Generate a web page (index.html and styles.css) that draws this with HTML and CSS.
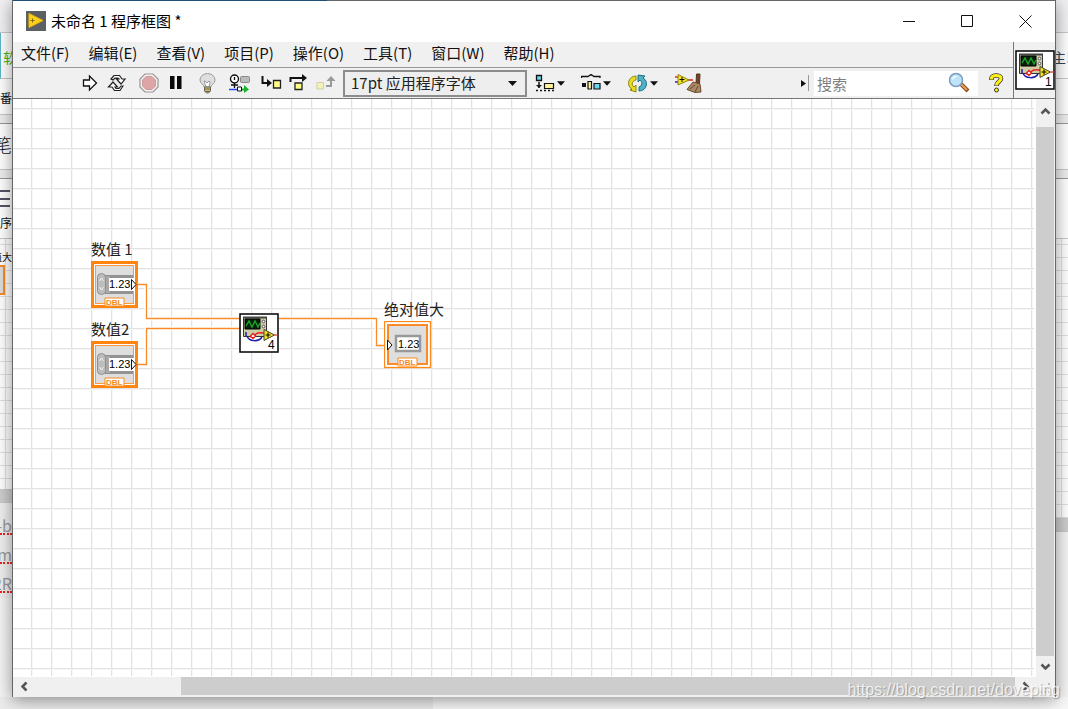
FILE: index.html
```html
<!DOCTYPE html>
<html lang="zh-CN">
<head>
<meta charset="utf-8">
<title>未命名 1 程序框图</title>
<link rel="stylesheet" href="styles.css">
</head>
<body>
<svg class="defs" aria-hidden="true">
  <symbol id="vi" viewBox="0 0 40 40">
    <rect x="1" y="1" width="38" height="38" fill="#fff" stroke="#111" stroke-width="1.600"/>
    <path d="M4.500 4.500h23v19h-23z" fill="#cfcda6" stroke="#333"/>
    <path d="M4 3.500h24v2H4z" fill="#444"/>
    <path d="M6 6h15v10H6z" fill="#06210a" stroke="#000"/>
    <path d="M7 13l3-5 3 6 3-6 3 6 2-4" fill="none" stroke="#18a82c" stroke-width="1.400"/>
    <circle cx="24.500" cy="8.500" r="1.300" fill="#fff" stroke="#555"/><circle cx="24.500" cy="13.500" r="1.300" fill="#fff" stroke="#555"/>
    <path d="M7 19v4M8 23c2 6 12 6 15 1" fill="none" stroke="#1c1ca8" stroke-width="1.500"/>
    <path d="M11 24c3 0 4-1 6-3s6-1 9-1" fill="none" stroke="#ef2020" stroke-width="1.500"/>
    <path d="M14 20.500l2.500 2.500-2.500 2.500-2.500-2.500z" fill="#fff" stroke="#e01818" stroke-width="1.300"/>
    <path d="M25 16.500L35.500 22 25 27.500z" fill="#f4e414" stroke="#444"/>
    <path d="M26.500 22h5M29 19.500v5" stroke="#111" stroke-width="1.200"/>
    <path d="M35.500 22h3" stroke="#f33" stroke-width="1.300"/>
  </symbol>
  <symbol id="control" viewBox="0 0 48 48">
    <rect x="1.500" y="1.500" width="44" height="44" fill="#fff" stroke="#ff8410" stroke-width="3"/>
    <rect x="4.500" y="4.500" width="38" height="38" fill="#dedede" stroke="#ff9a3c"/>
    <path d="M14 14h28v3H14zM14 30h28v3H14z" fill="#929292"/>
    <path d="M13 15h6v17h-6z" fill="#a8a8a8"/>
    <rect x="6.500" y="12.500" width="8" height="21" rx="4" fill="#bdbdbd" stroke="#8e8e8e"/>
    <path d="M8.500 20l2-3 2 3M8.500 26l2 3 2-3" fill="none" stroke="#f2f2f2"/>
    <path d="M18 17h25v13H18z" fill="#fff"/>
    <path d="M40.500 18.500l4.500 5-4.500 5z" fill="#fff" stroke="#111"/>
    <text x="18" y="27" font-size="11" fill="#000">1.23</text>
    <path d="M14 37h19v8H14z" fill="#fff" stroke="#ff8a1c"/>
    <text x="15" y="44" font-size="8" font-weight="700" fill="#f58a20">DBL</text>
  </symbol>
  <symbol id="indicator" viewBox="0 0 48 48">
    <rect x=".5" y=".5" width="46" height="46" fill="#fff" stroke="#ff8a1c" stroke-width="1.300"/>
    <rect x="4" y="4" width="39" height="39" fill="#dedede" stroke="#f98c28" stroke-width="2"/>
    <rect x="12" y="15" width="24" height="15" fill="#fff" stroke="#999" stroke-width="2.500"/>
    <path d="M3.500 19l4.500 5-4.500 5z" fill="#fff" stroke="#111"/>
    <text x="14" y="27" font-size="11" fill="#000">1.23</text>
    <path d="M14 37h19v8H14z" fill="#fff" stroke="#ff8a1c"/>
    <text x="15" y="44" font-size="8" font-weight="700" fill="#f58a20">DBL</text>
  </symbol>
  <symbol id="caret" viewBox="0 0 9 5"><path d="M0 0h9L4.500 5z" fill="#111"/></symbol>
</svg>

<div class="desktop">
  <div class="behind behind-left" aria-hidden="true">
    <div class="strip s-title"></div>
    <div class="strip s-row green">软</div>
    <div class="strip s-tab">番</div>
    <div class="strip s-gap"></div>
    <div class="strip s-note">笔</div>
    <div class="strip s-gap"></div>
    <div class="strip s-tool"><i class="bars"></i><span>序</span></div>
    <div class="strip s-grid"><span>值大</span><i class="piece"></i></div>
    <div class="strip s-scroll"></div>
    <div class="strip s-text"><u>-b</u><u>m</u><u>2R</u></div>
  </div>

  <main class="window">
    <header class="titlebar">
      <svg class="logo" width="20" height="20" viewBox="0 0 20 20"><path d="M0 0h20v20H0z" fill="#5d6063"/><path d="M3 2.500L17 9.500 3 16.500z" fill="#ffd21a" stroke="#f4b400"/><path d="M4.500 9.500h4M6.500 7.500v4" stroke="#7b6a1a"/></svg>
      <h1>未命名 1 程序框图 *</h1>
      <div class="sysbuttons">
        <button aria-label="最小化"><svg width="13" height="13"><path d="M0 6.500h12" stroke="#111"/></svg></button>
        <button aria-label="最大化"><svg width="13" height="13"><path d="M.5 .5h11v11H.5z" fill="none" stroke="#111"/></svg></button>
        <button aria-label="关闭"><svg width="13" height="13"><path d="M.5 .5l12 12M12.500 .5l-12 12" stroke="#111"/></svg></button>
      </div>
    </header>

    <div class="bars-area">
      <div class="bars-main">
        <nav class="menu">
          <button>文件(F)</button><button>编辑(E)</button><button>查看(V)</button><button>项目(P)</button><button>操作(O)</button><button>工具(T)</button><button>窗口(W)</button><button>帮助(H)</button>
        </nav>
        <div class="toolbar">
          <div class="group">
            <button aria-label="运行"><svg width="16" height="18" viewBox="0 0 16 18"><path d="M1.500 6h6V2l7 7-7 7v-4h-6z" fill="#fff" stroke="#111" stroke-width="1.300"/></svg></button>
            <button aria-label="连续运行"><svg width="20" height="18" viewBox="0 0 20 18"><g fill="#fff" stroke="#222" stroke-width="1.200"><path d="M4 5l3-3.500h5.500L15 5h3l-4 5-4.500-5H12l-1-1H8L6 6z"/><path d="M16 12l-3 4.500H7.500L5 13H1.500L6 8l4.500 5H8l1 1.500h3l2-2.500z"/></g></svg></button>
          </div>
          <div class="group">
            <button aria-label="中止执行"><svg width="20" height="20" viewBox="0 0 20 20"><path d="M6 1h8l5 5v8l-5 5H6l-5-5V6z" fill="#f4f4f4" stroke="#9b9393" stroke-width="1.200"/><path d="M7 3.500h6L16.500 7v6L13 16.500H7L3.500 13V7z" fill="#dda5a5" stroke="#c99"/></svg></button>
            <button aria-label="暂停"><svg width="12" height="14"><path d="M0 0h4.500v13H0zM7 0h4.500v13H7z" fill="#080808"/></svg></button>
          </div>
          <div class="group">
            <button aria-label="高亮显示执行过程"><svg width="17" height="21" viewBox="0 0 17 21"><path d="M5 14c0-3-4-3-4-7a7.500 6.500 0 0 1 15 0c0 4-4 4-4 7z" fill="#dedede" stroke="#9a9a9a"/><path d="M6 8l2 2 2-2 1 1-1 5H7L5 8z" fill="#fff" stroke="#999"/><path d="M5.500 14h6v4l-2 2h-2l-2-2z" fill="#d6c054" stroke="#666"/><path d="M5 16h7M6 18.500h5" stroke="#666"/></svg></button>
          </div>
          <div class="group">
            <button aria-label="保存连线值"><svg width="21" height="19" viewBox="0 0 21 19"><circle cx="5.500" cy="5" r="4" fill="#fff" stroke="#111" stroke-width="1.400"/><path d="M5.500 3v3M5.500 9v5M2 11h7" stroke="#111" stroke-width="1.300" fill="none"/><rect x="11.500" y="2.500" width="9" height="6" rx="1" fill="#bbb" stroke="#888"/><path d="M0 15.500h9" stroke="#2049e8" stroke-width="1.500"/><path d="M8.500 13h4v4h-4z" fill="#fff" stroke="#111"/><path d="M13 14.500h2V11l5 4.500-5 3.500v-2.500h-2z" fill="#18b52a"/></svg></button>
          </div>
          <div class="group">
            <button aria-label="单步步入"><svg width="21" height="16" viewBox="0 0 21 16"><path d="M1.500 1v7H8" fill="none" stroke="#111" stroke-width="2"/><path d="M6 4l5 4-5 4z" fill="#111"/><path d="M12.500 5.500h7V13h-7z" fill="#ffff85" stroke="#222" stroke-width="1.300"/></svg></button>
            <button aria-label="单步步过"><svg width="20" height="18" viewBox="0 0 20 18"><path d="M1.500 8V4H14" fill="none" stroke="#111" stroke-width="2"/><path d="M13 0l5 4-5 4z" fill="#111"/><path d="M6 9h7v6.500H6z" fill="#ffff85" stroke="#222" stroke-width="1.300"/></svg></button>
            <button aria-label="单步步出"><svg width="20" height="16" viewBox="0 0 20 16"><path d="M1 7.500h6.500V14H1z" fill="#f2f1b8" stroke="#cfcfa8"/><path d="M10 11h5V5" fill="none" stroke="#999" stroke-width="2"/><path d="M10.500 6L15 1l4.500 5z" fill="#999"/></svg></button>
          </div>
          <label class="font-pick">
            <select aria-label="字体"><option>17pt 应用程序字体</option></select>
            <svg width="9" height="5"><use href="#caret"/></svg>
          </label>
          <div class="group drops">
            <button aria-label="对齐对象"><svg width="20" height="18" viewBox="0 0 20 18"><path d="M1.500 1.500h5v5h-5z" fill="#67d9ee" stroke="#111" stroke-width="1.300"/><path d="M4 8v6" stroke="#111" stroke-width="1.500"/><path d="M1 11h6l-3 3z" fill="#111"/><path d="M9.500 9.500h9v5h-9z" fill="#fff19a" stroke="#111" stroke-width="1.200"/><path d="M1 16.500h18" stroke="#111" stroke-width="1.300" stroke-dasharray="2 2"/></svg><svg width="8" height="5"><use href="#caret"/></svg></button>
            <button aria-label="分布对象"><svg width="20" height="18" viewBox="0 0 20 18"><path d="M.5 4V2.500H7L10 .5l3 2h6V4" fill="none" stroke="#111" stroke-width="1.300"/><path d="M1 9h4v4H1z" fill="#111"/><path d="M7 7.500h3.500V15H7z" fill="#fff19a" stroke="#111" stroke-width="1.200"/><path d="M13 9.500h6V15h-6z" fill="#67d9ee" stroke="#111" stroke-width="1.200"/></svg><svg width="8" height="5"><use href="#caret"/></svg></button>
            <button aria-label="重新排序"><svg width="21" height="19" viewBox="0 0 21 19"><path d="M9 2C1 2-1 12 5 15l-2 1 6 2V11l-2 2C4 11 5 7 9 6z" fill="#e6dd24" stroke="#8d8510"/><path d="M12 17c8 0 10-10 4-13l2-2-7-1v7l2-2c3 2 2 6-1 7z" fill="#4fb3c8" stroke="#1d6f80"/></svg><svg width="8" height="5"><use href="#caret"/></svg></button>
            <button aria-label="整理程序框图"><svg width="27" height="22" viewBox="0 0 27 22"><path d="M0 5h4" stroke="#e22" stroke-width="1.500"/><path d="M0 10h4" stroke="#22d" stroke-width="1.500"/><path d="M12 8h6" stroke="#e22" stroke-width="1.500"/><path d="M3 2.500L14 8 3 13z" fill="#f5e51a" stroke="#8d8410"/><path d="M4.500 7.500h5M7 5v5" stroke="#111"/><path d="M21.500 2h3.500l-.5 10h-3.500z" fill="#70432a" stroke="#5a3520"/><path d="M18 10l7 2 1 8-6 .5-8-3z" fill="#a88a68" stroke="#6b4a2c"/><path d="M15 17l5-4M20 20l3-6" stroke="#6c4a2c"/></svg></button>
          </div>
          <div class="search-area">
            <svg width="9" height="16" viewBox="0 0 9 16"><path d="M1 5l5 3.500L1 12z" fill="#111"/><path d="M8.500 0v16" stroke="#999"/></svg>
            <label class="search"><input type="text" placeholder="搜索" aria-label="搜索">
              <svg width="22" height="22" viewBox="0 0 22 22"><path d="M13 12l7 7" stroke="#8b4a20" stroke-width="4"/><path d="M13 12l6 6" stroke="#e8a05a" stroke-width="2"/><circle cx="8" cy="8" r="6.500" fill="#bfe4fa" stroke="#7e9cc0" stroke-width="1.500"/><path d="M4 8c0-3 3-5 6-4-3 1-4 2-6 4z" fill="#fff"/></svg></label>
            <button aria-label="帮助"><svg width="15" height="20" viewBox="0 0 15 20"><path d="M2.500 7V5.500c0-4 9.500-4 9.500 0 0 3-4.500 3-4.500 7.500" fill="none" stroke="#333" stroke-width="4.500"/><path d="M2.500 6.500v-1c0-4 9.500-4 9.500 0 0 3-4.500 3-4.500 7" fill="none" stroke="#ffef16" stroke-width="3"/><circle cx="7.500" cy="17" r="2" fill="#ffef16" stroke="#333"/></svg></button>
          </div>
        </div>
      </div>
      <div class="vi-pane"><svg class="glyphs" width="40" height="40"><use href="#vi"/><text x="30" y="36" font-size="12">1</text></svg></div>
    </div>

    <div class="workspace">
      <section class="canvas" aria-label="程序框图">
        <svg class="wires" width="440" height="300" viewBox="13 99 440 300" fill="none"><path d="M137 284.500h9.500v34H240M137 364.500h9.500v-36H240M279 318.500h97.500v27H386" stroke="#fff" stroke-width="4"/><path d="M137 284.500h9.500v34H240M137 364.500h9.500v-36H240M279 318.500h97.500v27H386" stroke="#f98c28" stroke-width="1.300"/></svg>
        <div class="node n1"><span>数值 1</span><svg class="glyphs" width="48" height="48"><use href="#control"/></svg></div>
        <div class="node n2"><span>数值2</span><svg class="glyphs" width="48" height="48"><use href="#control"/></svg></div>
        <div class="node n3"><svg class="glyphs" width="40" height="40"><use href="#vi"/><text x="29" y="36" font-size="12">4</text></svg></div>
        <div class="node n4"><span>绝对值大</span><svg class="glyphs" width="48" height="48"><use href="#indicator"/></svg></div>
      </section>
      <div class="vscroll">
        <button class="up" aria-label="向上滚动"><svg width="11" height="8"><path d="M1.500 6.500l4-4 4 4" fill="none" stroke="#555" stroke-width="2.500"/></svg></button>
        <div class="thumb"></div>
        <button aria-label="向下滚动"><svg width="11" height="8"><path d="M1.500 1.500l4 4 4-4" fill="none" stroke="#555" stroke-width="2.500"/></svg></button>
      </div>
      <div class="hscroll">
        <button aria-label="向左滚动"><svg width="8" height="11"><path d="M6.500 1.500l-4 4 4 4" fill="none" stroke="#555" stroke-width="2.500"/></svg></button>
        <div class="track"><div class="thumb"></div></div>
        <button aria-label="向右滚动"><svg width="8" height="11"><path d="M1.500 1.500l4 4-4 4" fill="none" stroke="#555" stroke-width="2.500"/></svg></button>
      </div>
      <div class="corner"><svg width="12" height="12"><path d="M8 2h2v2H8zM4 6h2v2H4zM8 6h2v2H8zM0 10h2v2H0zM4 10h2v2H4zM8 10h2v2H8z" fill="#bbb"/></svg></div>
    </div>
  </main>

  <div class="behind behind-right" aria-hidden="true">
    <div class="strip s-title"></div>
    <div class="strip s-row blue">主以</div>
    <div class="strip s-tab"></div>
    <div class="strip s-gap"></div>
    <div class="strip s-note"></div>
    <div class="strip s-gap"></div>
    <div class="strip s-tool"></div>
    <div class="strip s-grid tall"></div>
    <div class="strip s-scroll"></div>
  </div>
  <div class="floor"></div>
  <div class="watermark">https://blog.csdn.net/doveping</div>
</div>
</body>
</html>
```
FILE: styles.css
```css
* { box-sizing: border-box; }
body {
  margin: 0;
  font: 15px/20px "Noto Sans CJK SC", sans-serif;
  color: #111;
}
button {
  margin: 0;
  padding: 0;
  border: 0;
  background: none;
  font: inherit;
  color: inherit;
  display: flex;
  align-items: center;
  justify-content: center;
}
svg { display: block; flex: none; }
.defs { position: absolute; width: 0; height: 0; }
.glyphs { font-family: "Liberation Sans", sans-serif; }

.desktop {
  position: relative;
  display: grid;
  grid-template-columns: 12px minmax(0, 1fr) 12px;
  grid-template-rows: minmax(0, 1fr) 12px;
  height: 100vh;
  overflow: hidden;
  background: #f4f4f4;
}

/* Windows partly hidden behind the diagram */
.behind { overflow: hidden; white-space: nowrap; }
.strip { background: #fff; border-bottom: 1px solid #c8c8c8; overflow: hidden; }
.s-title { height: 33px; background: #f1f1f4; }
.s-row { height: 46px; padding: 14px 0 0 2px; font-size: 14px; }
.green { color: #3fb618; }
.blue { color: #345; padding-left: 0; text-indent: -4px; }
.behind-left .s-row { border-left: 1px solid #5cb8c8; }
.s-tab { height: 36px; padding-top: 9px; font-size: 12px; }
.s-gap { height: 9px; background: #eee; border-color: #999; }
.s-note { height: 46px; padding-top: 10px; font-size: 18px; font-weight: 300; display: flex; justify-content: flex-end; }
.s-tool { height: 60px; padding-top: 11px; font-size: 12px; }
.s-tool span { display: flex; justify-content: flex-end; padding-top: 6px; }
.bars { display: block; width: 10px; height: 17px; border-top: 2px solid #556; border-bottom: 2px solid #556; background: linear-gradient(#556, #556) 0 6px / 100% 2px no-repeat; }
.s-grid {
  height: 251px;
  padding-top: 8px;
  font-size: 10px;
  background-image: linear-gradient(#e0e0e0 1px, transparent 1px), linear-gradient(90deg, #e0e0e0 1px, transparent 1px);
  background-size: 13px 13px;
  background-position: 5px 5px;
}
.s-grid span { display: flex; justify-content: flex-end; }
.piece { display: block; width: 5px; height: 30px; margin-top: -2px; border: 2px solid #f98c28; border-left: 0; background: #ddd; }
.tall { height: 280px; }
.s-scroll { height: 13px; background: #cdcdcd; }
.s-text { height: 95px; padding-top: 12px; background: #efefef; border: 0; color: #999; font-size: 16px; }
.s-text u { display: flex; justify-content: flex-end; height: 20px; margin-bottom: 9px; border-bottom: 2px dotted #e22; text-decoration: none; }

.window {
  position: relative;
  z-index: 1;
  display: flex;
  flex-direction: column;
  border: solid #666;
  border-width: 0 1px;
  background: #f0f0f0;
  box-shadow: 0 3px 16px rgba(0, 0, 0, .42);
}

.titlebar {
  display: flex;
  align-items: center;
  height: 42px;
  padding-left: 13px;
  background: linear-gradient(90deg, #1d5078 314px, #666 314px) 0 0 / 100% 1px no-repeat, #fff;
}
.titlebar h1 { flex: 1; margin: 0; padding-left: 5px; font-size: 15px; font-weight: 400; color: #000; }
.sysbuttons { display: flex; padding-right: 1px; }
.sysbuttons button { width: 58px; height: 40px; }

.bars-area { display: flex; border-bottom: 1px solid #777; }
.bars-main { flex: 1; min-width: 0; }
.menu { display: flex; gap: 19px; height: 26px; padding-left: 8px; border-bottom: 1px solid #999; }
.menu button { height: 22px; white-space: nowrap; }
.toolbar { display: flex; align-items: center; gap: 5px; height: 30px; padding-left: 63px; }
.group { display: flex; }
.group button { width: 27px; height: 26px; }
.font-pick { position: relative; margin-left: -1px; }
.font-pick select {
  display: block;
  width: 184px;
  height: 27px;
  padding: 0 24px 0 6px;
  border: 2px solid #8c8c8c;
  border-radius: 0;
  appearance: none;
  background: #eee;
  font: inherit;
  color: #222;
}
.font-pick svg { position: absolute; right: 10px; top: 11px; pointer-events: none; }
.drops { margin-left: -5px; }
.drops button { width: 46px; gap: 2px; }
.search-area { display: flex; align-items: center; gap: 5px; margin-left: auto; padding-right: 4px; }
.search { display: flex; align-items: center; width: 164px; height: 25px; padding: 0 8px 0 3px; background: #fff; }
.search input { flex: 1; min-width: 0; height: 24px; padding: 0; border: 0; outline: 0; background: none; font: inherit; }
.search input::placeholder { color: #808080; opacity: 1; }
.search-area button { width: 26px; height: 26px; }
.vi-pane { display: flex; align-items: center; justify-content: flex-end; width: 42px; border-left: 1px solid #777; }

.workspace { flex: 1; min-height: 0; display: grid; grid-template-columns: minmax(0, 1fr) 19px; grid-template-rows: minmax(0, 1fr) 20px; }
.canvas {
  position: relative;
  overflow: hidden;
  border: solid #fff;
  border-width: 0 2px 1px 0;
  background-color: #fff;
  background-image: linear-gradient(#e2e2e2 1px, #f7f7f7 1px, #f7f7f7 2px, transparent 2px), linear-gradient(90deg, #e2e2e2 1px, #f7f7f7 1px, #f7f7f7 2px, transparent 2px);
  background-size: 20px 20px;
  background-position: 18px 9px;
}
.wires { position: absolute; left: 0; top: 0; }
.node { position: absolute; color: #222; white-space: nowrap; }
.node span { display: block; height: 22px; }
.n1 { left: 78px; top: 140px; }
.n2 { left: 78px; top: 220px; }
.n3 { left: 226px; top: 214px; }
.n4 { left: 371px; top: 200px; }

.vscroll { display: flex; flex-direction: column; padding-right: 1px; }
.vscroll button { width: 18px; height: 21px; }
.vscroll .up { height: 28px; padding-bottom: 4px; }
.thumb { flex: 1; background: #cdcdcd; }
.hscroll { display: flex; padding-bottom: 2px; }
.hscroll button { width: 21px; }
.track { flex: 1; display: flex; padding-left: 14.4%; }
.corner { display: flex; align-items: center; justify-content: center; }
.floor { grid-column: 1 / -1; background: linear-gradient(90deg, #ececec 433px, #f8f8f8 433px); }
.watermark {
  position: absolute;
  z-index: 2;
  right: 8px;
  bottom: 9px;
  font: 16px/20px "Liberation Sans", sans-serif;
  color: rgba(255, 255, 255, .8);
  text-shadow: 1px 1px 1px rgba(100, 100, 100, .5);
}
```
